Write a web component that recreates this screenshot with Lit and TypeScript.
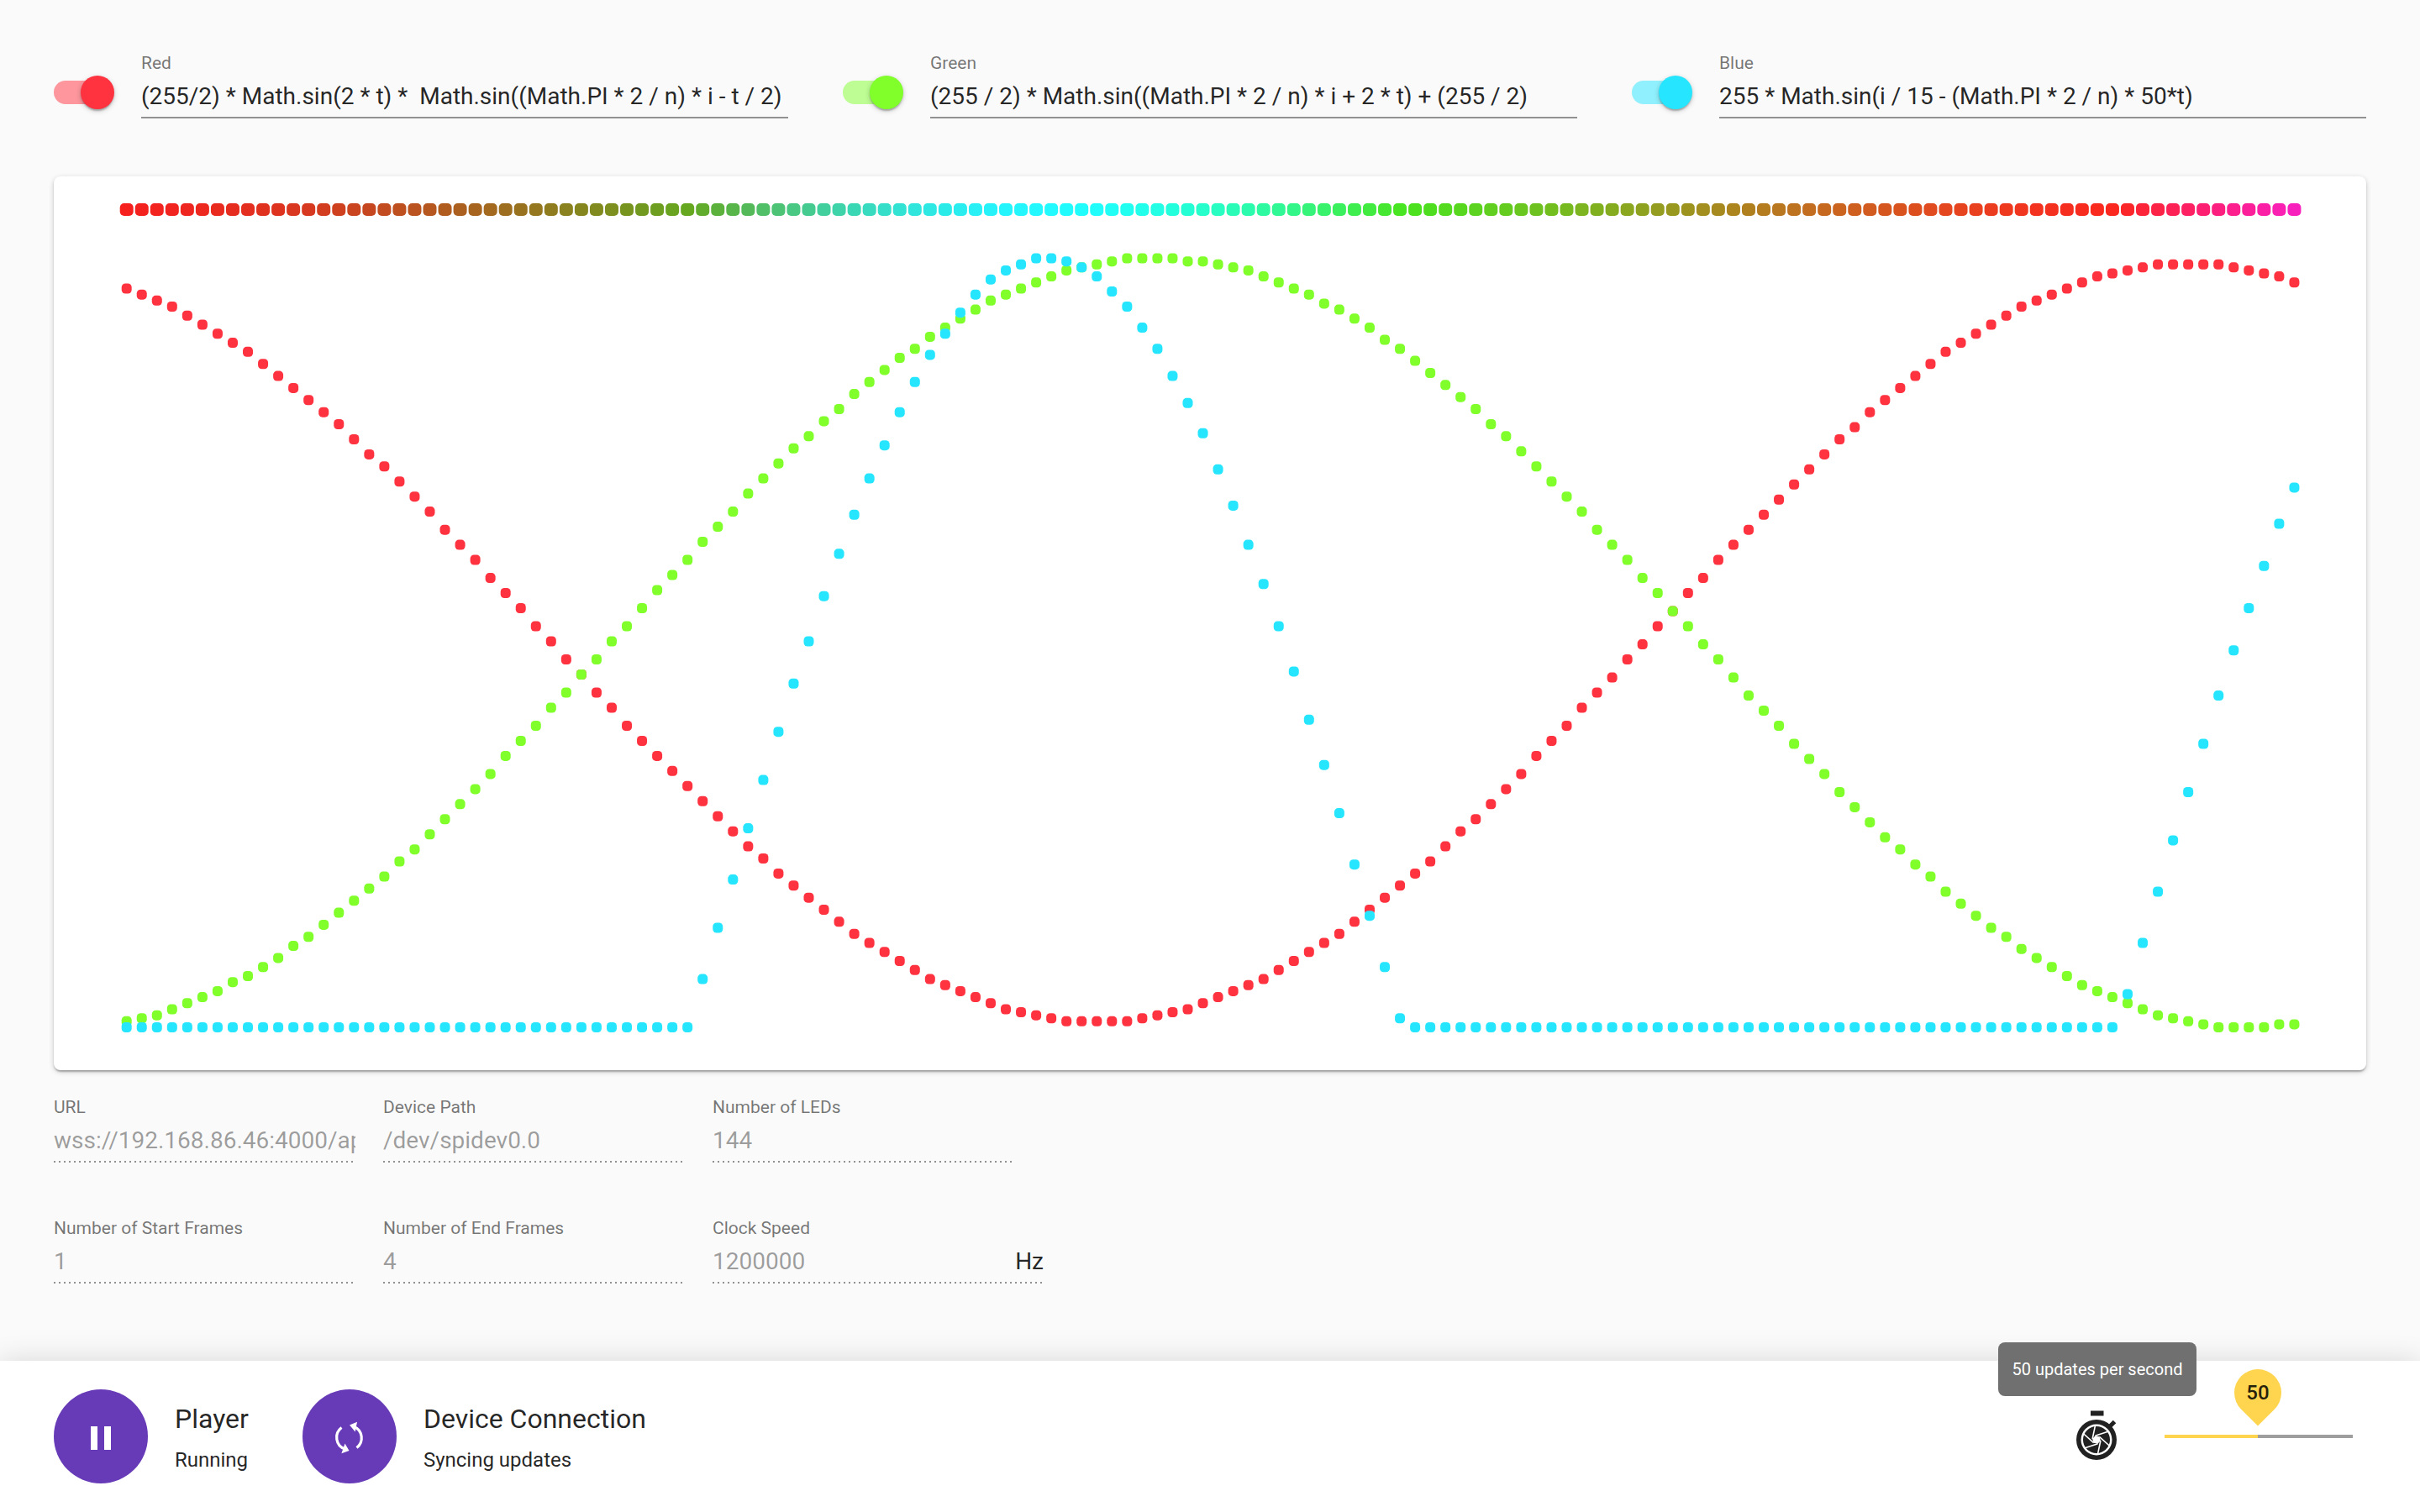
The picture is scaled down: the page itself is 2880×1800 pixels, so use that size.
import { LitElement, html, css, svg } from 'lit';
import { customElement } from 'lit/decorators.js';

const RED = '#ff3240';
const GREEN = '#80ff2b';
const BLUE = '#26e6ff';

const n = 144;
const t = 2.445;
const BLUE_PHASE = -2.472;

const redAt = (i: number) =>
  Math.round((255 / 2) * Math.sin(2 * t) * Math.sin(((Math.PI * 2) / n) * i - t / 2) + 255 / 2);
const greenAt = (i: number) =>
  Math.round((255 / 2) * Math.sin(((Math.PI * 2) / n) * i + 2 * t) + 255 / 2);
const blueAt = (i: number) => Math.max(0, Math.round(255 * Math.sin(i / 15 + BLUE_PHASE)));

const leds = Array.from({ length: n }, (_, i) => ({
  x: 86.7 + i * 18.04,
  r: redAt(i),
  g: greenAt(i),
  b: blueAt(i),
}));

const plotY = (v: number) => 1013 - v * 3.59;

@customElement('led-chart')
export class LedChart extends LitElement {
  static styles = css`
    :host {
      display: block;
      height: 1064px;
      background: #fff;
      border-radius: 8px;
      box-shadow: 0 2px 6px 0 rgba(0, 0, 0, 0.2), 0 2px 2px 0 rgba(0, 0, 0, 0.14), 0 4px 2px -2px rgba(0, 0, 0, 0.12);
    }
    svg {
      display: block;
    }
  `;

  render() {
    return html`
      <svg width="2752" height="1064" viewBox="0 0 2752 1064">
        ${leds.map(
          (l) => svg`<rect x=${l.x - 8} y="32" width="16" height="15" rx="5"
            fill="rgb(${l.r},${l.g},${l.b})" fill-opacity="0.88"></rect>`
        )}
        ${leds.map((l) => svg`<rect x=${l.x - 6} y=${plotY(l.r) - 6} width="12" height="12" rx="4.5" fill=${RED}></rect>`)}
        ${leds.map((l) => svg`<rect x=${l.x - 6} y=${plotY(l.g) - 6} width="12" height="12" rx="4.5" fill=${GREEN}></rect>`)}
        ${leds.map((l) => svg`<rect x=${l.x - 6} y=${plotY(l.b) - 6} width="12" height="12" rx="4.5" fill=${BLUE}></rect>`)}
      </svg>
    `;
  }
}

const shutterLines = Array.from({ length: 6 }, (_, k) => {
  const a = ((k * 60 + 12) * Math.PI) / 180;
  const x1 = 35 + 5 * Math.cos(a);
  const y1 = 42 + 5 * Math.sin(a);
  const x2 = x1 + 16 * Math.cos(a + Math.PI / 2);
  const y2 = y1 + 16 * Math.sin(a + Math.PI / 2);
  return { x1, y1, x2, y2 };
});

const hexagon = Array.from({ length: 6 }, (_, k) => {
  const a = ((k * 60 + 12) * Math.PI) / 180;
  return `${35 + 5 * Math.cos(a)},${42 + 5 * Math.sin(a)}`;
}).join(' ');

const channels = [
  { label: 'Red', color: RED, value: '(255/2) * Math.sin(2 * t) *  Math.sin((Math.PI * 2 / n) * i - t / 2) +' },
  { label: 'Green', color: GREEN, value: '(255 / 2) * Math.sin((Math.PI * 2 / n) * i + 2 * t) + (255 / 2)' },
  { label: 'Blue', color: BLUE, value: '255 * Math.sin(i / 15 - (Math.PI * 2 / n) * 50*t)' },
];

const settings = [
  { label: 'URL', value: 'wss://192.168.86.46:4000/ap' },
  { label: 'Device Path', value: '/dev/spidev0.0' },
  { label: 'Number of LEDs', value: '144' },
  { label: 'Number of Start Frames', value: '1' },
  { label: 'Number of End Frames', value: '4' },
  { label: 'Clock Speed', value: '1200000', unit: 'Hz' },
];

@customElement('app-root')
export class AppRoot extends LitElement {
  static styles = css`
    :host {
      display: flex;
      flex-direction: column;
      width: 2880px;
      height: 1800px;
      overflow: hidden;
      background: #fafafa;
      font-family: Roboto, sans-serif;
      color: rgba(0, 0, 0, 0.87);
    }
    .content {
      flex: 1;
      padding: 65px 64px 0;
    }
    .channels {
      display: flex;
      justify-content: space-between;
      height: 145px;
    }
    .channel {
      display: flex;
      width: 874px;
    }
    .switch {
      position: relative;
      flex: none;
      width: 104px;
      height: 76px;
    }
    .track {
      position: absolute;
      top: 31px;
      left: 0;
      width: 68px;
      height: 28px;
      border-radius: 14px;
      opacity: 0.5;
    }
    .thumb {
      position: absolute;
      top: 25px;
      left: 32px;
      width: 40px;
      height: 40px;
      border-radius: 50%;
      box-shadow: 0 2px 6px 0 rgba(0, 0, 0, 0.2), 0 2px 2px 0 rgba(0, 0, 0, 0.14), 0 4px 2px -2px rgba(0, 0, 0, 0.12);
    }
    .field {
      flex: 1;
      min-width: 0;
    }
    .label {
      font-size: 21px;
      line-height: 21px;
      color: rgba(0, 0, 0, 0.54);
    }
    .value {
      margin-top: 10px;
      padding-bottom: 5px;
      font-size: 28px;
      line-height: 38px;
      white-space: pre;
      overflow: hidden;
      border-bottom: 2px solid rgba(0, 0, 0, 0.42);
    }
    .settings {
      display: grid;
      grid-template-columns: 356px 356px 394px;
      column-gap: 36px;
      row-gap: 68px;
      justify-content: start;
      margin-top: 34px;
    }
    .setting:nth-child(-n + 3) .dotted {
      width: 356px;
    }
    .setting:first-child .input-row {
      margin-right: -3px;
    }
    .input-row {
      display: flex;
      justify-content: space-between;
      margin-top: 10px;
      font-size: 28px;
      line-height: 38px;
    }
    .disabled {
      min-width: 0;
      overflow: hidden;
      white-space: nowrap;
      color: rgba(0, 0, 0, 0.38);
    }
    .dotted {
      height: 2px;
      margin-top: 5px;
      background-image: linear-gradient(to right, rgba(0, 0, 0, 0.42) 33%, transparent 0%);
      background-size: 6px 2px;
      background-repeat: repeat-x;
    }
    footer {
      position: relative;
      display: flex;
      justify-content: space-between;
      flex: none;
      height: 180px;
      box-sizing: border-box;
      padding: 34px 80px 0 64px;
      background: #fff;
      box-shadow: 0 0 32px rgba(0, 0, 0, 0.14);
    }
    .status-group {
      display: flex;
      gap: 64px;
    }
    .status {
      display: flex;
      gap: 32px;
    }
    .fab {
      display: flex;
      align-items: center;
      justify-content: center;
      width: 112px;
      height: 112px;
      border-radius: 50%;
      background: #673ab7;
    }
    .fab svg {
      display: block;
    }
    .status-text {
      padding-top: 15px;
    }
    .title {
      font-size: 32px;
      line-height: 40px;
    }
    .subtitle {
      margin-top: 13px;
      font-size: 24px;
      line-height: 32px;
    }
    .rate {
      display: flex;
      align-items: center;
      gap: 44px;
      height: 72px;
      margin-top: 18px;
    }
    .stopwatch {
      position: relative;
      width: 72px;
      height: 72px;
    }
    .stopwatch svg {
      display: block;
    }
    .tooltip {
      position: absolute;
      top: -74px;
      left: -82px;
      width: 236px;
      height: 64px;
      border-radius: 8px;
      background: #707070;
      color: #fff;
      font-size: 20px;
      line-height: 64px;
      text-align: center;
      white-space: nowrap;
    }
    .slider {
      position: relative;
      display: flex;
      width: 224px;
      height: 4px;
      margin-top: 4px;
      background: #9e9e9e;
    }
    .slider-fill {
      background: #ffd54f;
    }
    .pin {
      position: absolute;
      top: -78px;
      width: 56px;
      height: 56px;
      margin-left: -28px;
      border-radius: 50% 50% 50% 0;
      background: #ffd54f;
      transform: rotate(-45deg);
    }
    .pin span {
      display: block;
      font-size: 24px;
      font-weight: 500;
      line-height: 56px;
      text-align: center;
      transform: rotate(45deg);
    }
  `;

  render() {
    const rate = 50;
    const fill = (rate / 101) * 224;
    return html`
      <div class="content">
        <div class="channels">
          ${channels.map(
            (c) => html`
              <div class="channel">
                <div class="switch">
                  <div class="track" style="background:${c.color}"></div>
                  <div class="thumb" style="background:${c.color}"></div>
                </div>
                <div class="field">
                  <div class="label">${c.label}</div>
                  <div class="value">${c.value}</div>
                </div>
              </div>
            `
          )}
        </div>
        <led-chart></led-chart>
        <div class="settings">
          ${settings.map(
            (s) => html`
              <div class="setting">
                <div class="label">${s.label}</div>
                <div class="input-row">
                  <div class="disabled">${s.value}</div>
                  ${s.unit ? html`<div>${s.unit}</div>` : ''}
                </div>
                <div class="dotted"></div>
              </div>
            `
          )}
        </div>
      </div>
      <footer>
        <div class="status-group">
          <div class="status">
            <div class="fab">
              <svg width="48" height="48" viewBox="0 0 24 24" fill="#fff">
                <path d="M6 20h4V6H6v14zm8-14v14h4V6h-4z"></path>
              </svg>
            </div>
            <div class="status-text">
              <div class="title">Player</div>
              <div class="subtitle">Running</div>
            </div>
          </div>
          <div class="status">
            <div class="fab">
              <svg width="72" height="60" viewBox="0 0 72 60">
                <path d="M41.5 18.5A14.6 14.6 0 0 1 44.5 43.5M30.5 45A14.6 14.6 0 0 1 26.5 19.5" fill="none" stroke="#fff" stroke-width="3.2"></path>
                <path d="M36 16.5L45 12.7L42.7 24.5zM35.5 47L26.4 50.3L30.5 38.5z" fill="#fff"></path>
              </svg>
            </div>
            <div class="status-text">
              <div class="title">Device Connection</div>
              <div class="subtitle">Syncing updates</div>
            </div>
          </div>
        </div>
        <div class="rate">
          <div class="stopwatch">
            <svg width="72" height="72" viewBox="0 0 72 72">
              <rect x="28" y="7.5" width="15.5" height="6" fill="#212121"></rect>
              <line x1="50" y1="27" x2="56.5" y2="20.5" stroke="#212121" stroke-width="5"></line>
              <circle cx="35" cy="42" r="24" fill="#212121"></circle>
              <circle cx="35" cy="42" r="18.5" fill="#fff"></circle>
              <circle cx="35" cy="42" r="16" fill="#212121"></circle>
              ${shutterLines.map(
                (l) => svg`<line x1=${l.x1} y1=${l.y1} x2=${l.x2} y2=${l.y2} stroke="#fff" stroke-width="1.6"></line>`
              )}
              <polygon points=${hexagon} fill="#fff"></polygon>
            </svg>
            <div class="tooltip">${rate} updates per second</div>
          </div>
          <div class="slider">
            <div class="slider-fill" style="width:${fill}px"></div>
            <div class="pin" style="left:${fill}px"><span>${rate}</span></div>
          </div>
        </div>
      </footer>
    `;
  }
}
